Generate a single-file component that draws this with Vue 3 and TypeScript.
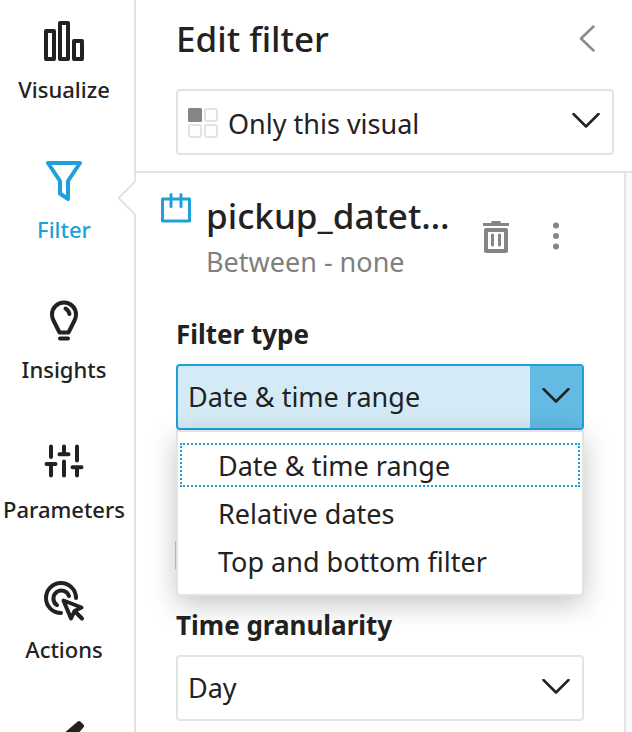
<script setup lang="ts">
import { ref } from 'vue'

type NavKey = 'visualize' | 'filter' | 'insights' | 'parameters' | 'actions' | 'themes'

interface NavItem {
  key: NavKey
  label: string
}

const navItems: NavItem[] = [
  { key: 'visualize', label: 'Visualize' },
  { key: 'filter', label: 'Filter' },
  { key: 'insights', label: 'Insights' },
  { key: 'parameters', label: 'Parameters' },
  { key: 'actions', label: 'Actions' },
  { key: 'themes', label: '' },
]

const filterTypes: string[] = ['Date & time range', 'Relative dates', 'Top and bottom filter']

const activeNav = ref<NavKey>('filter')
const scope = ref('Only this visual')
const filterType = ref(filterTypes[0])
const granularity = ref('Day')
const menuOpen = ref(true)

function choose(option: string) {
  filterType.value = option
  menuOpen.value = false
}
</script>

<template>
  <div class="app">
    <nav class="sidebar">
      <button
        v-for="item in navItems"
        :key="item.key"
        type="button"
        class="nav-item"
        :class="{ active: item.key === activeNav }"
        @click="activeNav = item.key"
      >
        <svg class="nav-icon" viewBox="0 0 48 48" aria-hidden="true">
          <g v-if="item.key === 'visualize'">
            <rect x="6" y="14" width="8" height="28" />
            <rect x="20" y="6" width="8" height="36" />
            <rect x="34" y="24" width="8" height="18" />
          </g>
          <path v-else-if="item.key === 'filter'" d="M8 6H40L28 24V42L20 36.500V24Z" />
          <g v-else-if="item.key === 'insights'">
            <path d="M19.500 35.500L13.500 23.500C12.500 21.500 12 19.500 12 17.500A12 12 0 0 1 36 17.500C36 19.500 35.500 21.500 34.500 23.500L28.500 35.500Z" />
            <path d="M25.500 11.500Q28.700 13.500 29.500 17" />
            <path d="M20 41.500H28" />
          </g>
          <g v-else-if="item.key === 'parameters'">
            <path d="M11 9.500V20M6.500 27H15.500M11 27V38.500" />
            <path d="M24 9.500V17.300M19.500 17.300H28.500M24 24.500V38.500" />
            <path d="M37 9.500V23.500M32.500 30.300H41.500M37 30.300V38.500" />
          </g>
          <g v-else-if="item.key === 'actions'">
            <path d="M36 21A15 15 0 1 0 21 36" />
            <path d="M29 19A8 8 0 1 0 17 28.200" />
            <path d="M23.500 23.500L41.500 30.500L34.500 34L31 41.500ZM34.500 34L42 41.500" />
          </g>
          <path v-else class="solid" d="M39 6L42 9L25 29L18 24Z" />
        </svg>
        <span class="nav-label">{{ item.label }}</span>
        <svg v-if="item.key === activeNav" class="notch" viewBox="0 0 18 36" aria-hidden="true">
          <path d="M18 1L1 18L18 35Z" class="notch-fill" />
          <path d="M17 1.500L0.800 18L17 34.500" class="notch-line" />
        </svg>
      </button>
    </nav>

    <main class="panel">
      <header class="panel-header">
        <div class="title-row">
          <h1>Edit filter</h1>
          <button type="button" class="collapse" aria-label="Collapse">
            <svg viewBox="0 0 16 28" aria-hidden="true"><path d="M14.500 1.500L2 13.500L14.500 25.500" /></svg>
          </button>
        </div>
        <div class="select scope">
          <svg class="scope-icon" viewBox="0 0 30 30" aria-hidden="true">
            <rect class="on" x="0" y="0" width="14" height="14" rx="1.500" />
            <rect x="17" y="1" width="12" height="12" rx="2" />
            <rect x="1" y="17" width="12" height="12" rx="2" />
            <rect x="17" y="17" width="12" height="12" rx="2" />
          </svg>
          <select v-model="scope" aria-label="Scope">
            <option>Only this visual</option>
          </select>
          <svg class="chevron" viewBox="0 0 28 18" aria-hidden="true"><path d="M1.500 1L14 13.500L26.500 1" /></svg>
        </div>
      </header>

      <div class="panel-body">
        <section class="filter-panel">
          <div class="field-head">
            <svg class="calendar" viewBox="0 0 32 32" aria-hidden="true">
              <path d="M2.500 5H29.500V27H2.500ZM11 0.500V12.500M21 0.500V12.500" />
            </svg>
            <div class="field-text">
              <h2>pickup_datet…</h2>
              <p>Between - none</p>
            </div>
            <button type="button" class="icon-button" aria-label="Delete">
              <svg viewBox="0 0 28 34" aria-hidden="true">
                <path class="fill" d="M1 3H9L10 1H18L19 3H27V6H1Z" />
                <path class="box" d="M4 10H24V31H4Z" />
                <path class="bars" d="M10.500 15V25M17.500 15V25" />
              </svg>
            </button>
            <button type="button" class="icon-button" aria-label="More options">
              <svg viewBox="0 0 28 34" aria-hidden="true">
                <circle class="fill" cx="14" cy="5.500" r="3" />
                <circle class="fill" cx="14" cy="16" r="3" />
                <circle class="fill" cx="14" cy="26.500" r="3" />
              </svg>
            </button>
          </div>

          <form class="form" @submit.prevent>
            <div class="field">
              <label id="type-label" for="filter-type">Filter type</label>
              <div class="combo">
                <button
                  id="filter-type"
                  type="button"
                  class="combo-button"
                  role="combobox"
                  aria-haspopup="listbox"
                  aria-controls="type-menu"
                  :aria-expanded="menuOpen"
                  @click="menuOpen = !menuOpen"
                >
                  <span class="combo-value">{{ filterType }}</span>
                  <span class="combo-arrow">
                    <svg class="chevron" viewBox="0 0 28 18" aria-hidden="true"><path d="M1.500 1L14 13.500L26.500 1" /></svg>
                  </span>
                </button>
                <ul v-show="menuOpen" id="type-menu" class="menu" role="listbox" aria-labelledby="type-label">
                  <li
                    v-for="option in filterTypes"
                    :key="option"
                    role="option"
                    class="option"
                    :class="{ focused: option === filterType }"
                    :aria-selected="option === filterType"
                    @click="choose(option)"
                  >
                    {{ option }}
                  </li>
                </ul>
              </div>
            </div>

            <input type="checkbox" class="apply" aria-label="Apply range" />

            <div class="field">
              <label for="granularity">Time granularity</label>
              <div class="select">
                <select id="granularity" v-model="granularity">
                  <option>Day</option>
                </select>
                <svg class="chevron" viewBox="0 0 28 18" aria-hidden="true"><path d="M1.500 1L14 13.500L26.500 1" /></svg>
              </div>
            </div>
          </form>
        </section>
      </div>
    </main>
  </div>
</template>

<style>
body {
  background: #fff;
}
</style>

<style scoped>
.app {
  --ink: #222;
  --muted: #7f7f7f;
  --line: #e3e3e3;
  --accent: #1fa0d9;
  display: flex;
  height: 100vh;
  overflow: hidden;
  color: var(--ink);
  font-family: "Noto Sans", "Open Sans", sans-serif;
  font-size: 27px;
  line-height: 36px;
}

.app *,
.app *::before {
  box-sizing: border-box;
}

button,
select {
  border: 0;
  padding: 0;
  margin: 0;
  background: none;
  color: inherit;
  font: inherit;
  cursor: pointer;
}

svg {
  display: block;
  fill: none;
  stroke: currentColor;
  stroke-linejoin: round;
  stroke-linecap: round;
}

.sidebar {
  display: flex;
  flex: none;
  flex-direction: column;
  width: 136px;
  padding-right: 6px;
  border-right: 2px solid var(--line);
}

.nav-item {
  position: relative;
  display: flex;
  flex: none;
  flex-direction: column;
  align-items: center;
  gap: 8px;
  height: 140px;
  padding-top: 17px;
  font-size: 22px;
  font-weight: 500;
  line-height: 32px;
}

.nav-item.active {
  color: var(--accent);
}

.nav-icon {
  width: 48px;
  height: 48px;
  stroke-width: 4;
}

.solid {
  fill: currentColor;
}

.notch {
  position: absolute;
  top: 40px;
  right: -8px;
  width: 18px;
  height: 36px;
}

.notch-fill {
  fill: #fff;
  stroke: #fff;
  stroke-width: 1;
}

.notch-line {
  stroke: #d9d9d9;
  stroke-width: 1.5;
}

.panel {
  display: flex;
  flex: 1;
  flex-direction: column;
  min-width: 0;
}

.panel-header {
  display: flex;
  flex-direction: column;
  gap: 28px;
  padding: 17px 18px 16px 40px;
  border-bottom: 2px solid var(--line);
}

.title-row {
  display: flex;
  align-items: center;
  justify-content: space-between;
}

h1,
h2,
p,
ul {
  margin: 0;
  padding: 0;
}

h1,
h2 {
  font-size: 35px;
  font-weight: 500;
  line-height: 44px;
}

.collapse {
  padding: 0 19px;
  color: #8a8a8a;
}

.collapse svg {
  width: 16px;
  height: 28px;
  stroke-width: 2.5;
}

.select {
  display: grid;
  grid-template-columns: 1fr auto;
  align-items: center;
  height: 66px;
  border: 2px solid var(--line);
  border-radius: 4px;
}

.select select {
  grid-row: 1;
  grid-column: 1 / -1;
  width: 100%;
  height: 100%;
  padding: 0 48px 0 10px;
  appearance: none;
}

.select .chevron {
  grid-row: 1;
  grid-column: 2;
  margin-right: 12px;
  pointer-events: none;
}

.scope select {
  padding-top: 4px;
  padding-left: 50px;
}

.scope-icon {
  grid-row: 1;
  grid-column: 1;
  width: 30px;
  height: 30px;
  margin-top: 2px;
  margin-left: 10px;
  stroke: var(--line);
  stroke-width: 2;
  pointer-events: none;
}

.scope-icon .on {
  fill: #858585;
  stroke: none;
}

.chevron {
  width: 28px;
  height: 18px;
  stroke-width: 2.5;
}

.panel-body {
  display: flex;
  flex: 1;
  min-height: 0;
  padding-right: 6px;
  background: #fafafa;
}

.filter-panel {
  flex: 1;
  min-width: 0;
  border-right: 2px solid var(--line);
  background: #fff;
}

.field-head {
  display: flex;
  align-items: center;
  gap: 20px;
  padding: 21px 48px 0 24px;
}

.calendar {
  flex: none;
  align-self: flex-start;
  width: 32px;
  height: 32px;
  margin-right: -6px;
  overflow: visible;
  color: var(--accent);
  stroke-width: 3;
}

.field-text {
  display: grid;
  flex: 1;
  gap: 6px;
  min-width: 0;
  white-space: nowrap;
}

.field-text p {
  color: var(--muted);
}

.icon-button {
  display: grid;
  flex: none;
  place-items: center;
  width: 40px;
  height: 40px;
  color: #858585;
}

.icon-button svg {
  width: 28px;
  height: 34px;
}

.icon-button .fill {
  fill: currentColor;
  stroke: none;
}

.icon-button .box {
  stroke-width: 4;
}

.icon-button .bars {
  stroke-width: 3;
}

.form {
  display: flex;
  flex-direction: column;
  padding: 36px 40px 12px;
}

.field {
  display: grid;
  gap: 12px;
}

label {
  font-size: 26px;
  font-weight: 700;
}

.combo {
  position: relative;
}

.combo-button {
  display: flex;
  width: 100%;
  height: 66px;
  border: 2px solid var(--accent);
  border-radius: 4px;
  background: #d4ebf7;
  text-align: left;
}

.combo-value {
  flex: 1;
  align-self: center;
  padding-left: 10px;
}

.combo-arrow {
  display: grid;
  place-items: center;
  align-self: stretch;
  width: 52px;
  background: #63bae2;
}

.menu {
  position: absolute;
  top: 100%;
  left: 0;
  right: 0;
  z-index: 1;
  display: grid;
  gap: 4px;
  padding: 11px 2px;
  border: 2px solid var(--line);
  border-radius: 0 0 4px 4px;
  background: #fff;
  box-shadow: 0 8px 28px rgba(0, 0, 0, 0.23);
  list-style: none;
}

.option {
  height: 44px;
  padding-left: 36px;
  border: 2px dotted transparent;
  line-height: 42px;
  cursor: pointer;
}

.option.focused {
  border-color: var(--accent);
}

.apply {
  width: 28px;
  height: 28px;
  margin: 111px 0 38px -1px;
  border: 1px solid #ccc;
  appearance: none;
}
</style>
